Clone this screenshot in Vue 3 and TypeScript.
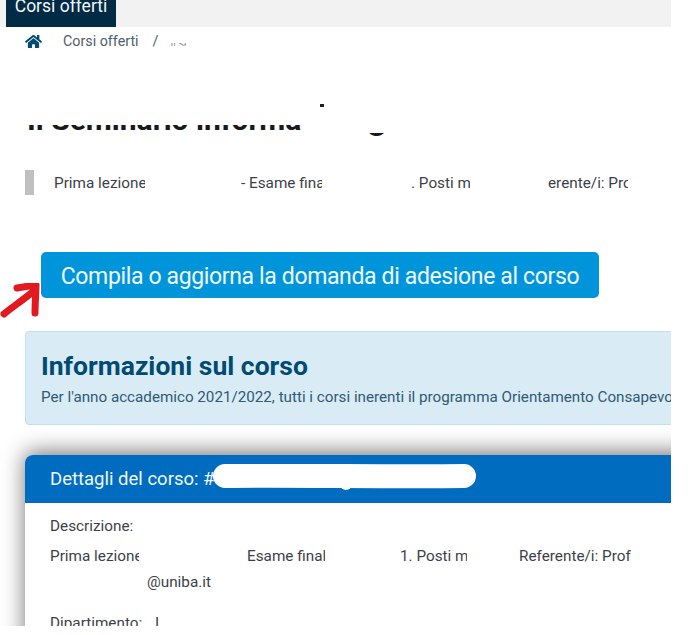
<script setup lang="ts">
const homePath =
  'M280.37 148.26L96 300.11V464a16 16 0 0 0 16 16l112.06-.29a16 16 0 0 0 15.92-16V368a16 16 0 0 1 16-16h64a16 16 0 0 1 16 16v95.64a16 16 0 0 0 16 16.05L464 480a16 16 0 0 0 16-16V300L295.67 148.26a12.19 12.19 0 0 0-15.3 0zM571.6 251.47L488 182.56V44.05a12 12 0 0 0-12-12h-56a12 12 0 0 0-12 12v72.61L318.47 43a48 48 0 0 0-61 0L4.34 251.47a12 12 0 0 0-1.6 16.9l25.5 31A12 12 0 0 0 45.15 301l235.22-193.74a12.19 12.19 0 0 1 15.3 0L530.9 301a12 12 0 0 0 16.9-1.6l25.5-31a12 12 0 0 0-1.7-16.93z'
</script>

<template>
  <div class="page">
    <header class="topbar">
      <div class="tab"><span>Corsi offerti</span></div>
    </header>

    <nav class="crumbs">
      <svg class="home" viewBox="0 0 576 512" aria-hidden="true"><path :d="homePath" /></svg>
      <a class="crumb">Corsi offerti</a>
      <span class="sep">/</span>
      <span class="crumb-rest"><span>Il Seminario</span></span>
    </nav>

    <div class="title">
      <i class="speck"></i>
      <div class="sliver main"><h1>Il Seminario informa</h1></div>
      <div class="sliver tail"><h1>g</h1></div>
    </div>

    <section class="meta">
      <i class="meta-bar"></i>
      <span class="clip m1">Prima lezione</span>
      <span class="clip m2">- Esame finale</span>
      <span class="clip m3">. Posti massimi</span>
      <span class="clip m4">erente/i: Prof</span>
    </section>

    <div class="cta">
      <svg class="arrow" viewBox="0 0 44 36" aria-hidden="true">
        <path d="M4 31 C12 24 22 18 35 7 M17 5 C23 4 29 3 36 2 C36 10 35 20 35 30" />
      </svg>
      <button class="cta-btn" type="button">Compila o aggiorna la domanda di adesione al corso</button>
    </div>

    <section class="info">
      <h2>Informazioni sul corso</h2>
      <p>Per l'anno accademico 2021/2022, tutti i corsi inerenti il programma Orientamento Consapevole</p>
    </section>

    <section class="card">
      <header class="card-head">
        <span>Dettagli del corso: #</span>
        <svg class="scribble" viewBox="0 0 264 27" aria-hidden="true">
          <path d="M12 12 C80 11 180 13 251 12" />
          <circle cx="133" cy="20" r="6" />
        </svg>
      </header>
      <div class="card-body">
        <p class="line">Descrizione:</p>
        <div class="line row">
          <span class="clip c1">Prima lezione</span>
          <span class="clip c2">Esame finale</span>
          <span class="clip c3">1. Posti massimi</span>
          <span class="clip c4">Referente/i: Prof</span>
        </div>
        <p class="line mail">@uniba.it</p>
        <p class="line dept">Dipartimento: <span class="dept-name">I</span></p>
      </div>
    </section>
  </div>
</template>

<style>
body { margin: 0; background: #fff; }
</style>

<style scoped>
.page {
  width: 671px;
  height: 626px;
  overflow: hidden;
  background: #fff;
  font-family: Roboto, "Liberation Sans", sans-serif;
  color: #3d3f47;
  font-size: 15.3px;
}
.topbar {
  height: 27px;
  background: #f2f2f2;
  padding-left: 6px;
}
.tab {
  width: 110px;
  height: 27px;
  background: #012a45;
  color: #f2f6f8;
  font-size: 17.5px;
  line-height: 12px;
  overflow: hidden;
  text-align: center;
}
.crumbs {
  height: 28px;
  display: flex;
  align-items: center;
  padding-left: 25px;
  color: #51606c;
  font-size: 14.3px;
}
.home { width: 17px; height: 15px; fill: #024b73; }
.crumb { margin-left: 21px; }
.sep { margin-left: 14px; }
.crumb-rest {
  margin: 6px 0 0 12px;
  width: 16px;
  height: 3px;
  overflow: hidden;
  white-space: nowrap;
  color: #8a949c;
  font-size: 10px;
  line-height: 3px;
}
.title {
  position: relative;
  display: flex;
  margin: 70px 0 0 27px;
  height: 37px;
}
.speck {
  position: absolute;
  left: 293px;
  top: -21px;
  width: 4px;
  height: 3px;
  background: #1c1e22;
}
.sliver { overflow: hidden; white-space: nowrap; }
.sliver h1 { margin: 0; font-size: 36px; line-height: 36px; font-weight: 700; color: #17191c; }
.main { width: 276px; height: 6px; }
.main h1 { margin-top: -23px; font-size: 30px; }
.tail { margin: 8px 0 0 64px; height: 3px; }
.tail h1 { margin-top: -35px; }

.meta {
  display: flex;
  align-items: center;
  height: 25px;
  margin: 8px 0 0 25px;
}
.meta-bar { width: 9px; height: 25px; background: #c0c0c0; }
.clip { display: block; overflow: hidden; white-space: nowrap; }
.m1 { width: 91px; margin-left: 20px; }
.m2 { width: 81px; margin-left: 96px; }
.m3 { width: 59px; margin-left: 89px; }
.m4 { width: 80px; margin-left: 78px; }

.cta {
  display: flex;
  align-items: flex-start;
  height: 46px;
  margin-top: 57px;
  position: relative;
}
.arrow {
  position: absolute;
  left: 0;
  top: 31px;
  width: 44px;
  height: 36px;
  fill: none;
  stroke: #e2191f;
  stroke-width: 7;
  stroke-linecap: round;
  stroke-linejoin: round;
}
.cta-btn {
  margin-left: 41px;
  width: 558px;
  height: 46px;
  padding: 2px 0 0;
  border: 0;
  border-radius: 5px;
  background: #0095db;
  color: #f0f9fd;
  font: 400 23px Roboto, "Liberation Sans", sans-serif;
  letter-spacing: -0.36px;
}
.info {
  box-sizing: border-box;
  width: 700px;
  height: 94px;
  margin: 33px 0 0 25px;
  padding: 19px 15px 0;
  background: #d9ebf5;
  border: 1px solid #c4e0ea;
  border-radius: 4px;
  color: #2f5a75;
}
.info h2 {
  margin: 0;
  font-size: 26.5px;
  line-height: 30px;
  font-weight: 700;
  color: #004b72;
}
.info p {
  margin: 6px 0 0;
  font-size: 15.2px;
  line-height: 20px;
  white-space: nowrap;
}
.card {
  width: 700px;
  margin: 30px 0 0 25px;
  height: 300px;
  border-radius: 8px 8px 0 0;
  background: #fff;
  box-shadow: 0 -3px 22px rgba(0, 0, 0, 0.55);
}
.card-head {
  position: relative;
  height: 48px;
  padding-left: 25px;
  display: flex;
  align-items: center;
  background: #006cbf;
  border-radius: 8px 8px 0 0;
  color: #f0f7fc;
  font-size: 18.5px;
}
.scribble {
  position: absolute;
  left: 188px;
  top: 9px;
  width: 264px;
  height: 27px;
  fill: #fff;
  stroke: #fff;
  stroke-width: 24;
  stroke-linecap: round;
}
.scribble circle { stroke: none; }
.card-body { padding: 13px 0 0 25px; }
.line { margin: 0; line-height: 20px; }
.row { display: flex; margin-top: 10px; }
.c1 { width: 89px; }
.c2 { width: 78px; margin-left: 108px; }
.c3 { width: 67px; margin-left: 75px; }
.c4 { width: 112px; margin-left: 52px; }
.mail { margin: 6px 0 0 97px; }
.dept { margin-top: 21px; }
.dept-name { margin-left: 9px; }
</style>
